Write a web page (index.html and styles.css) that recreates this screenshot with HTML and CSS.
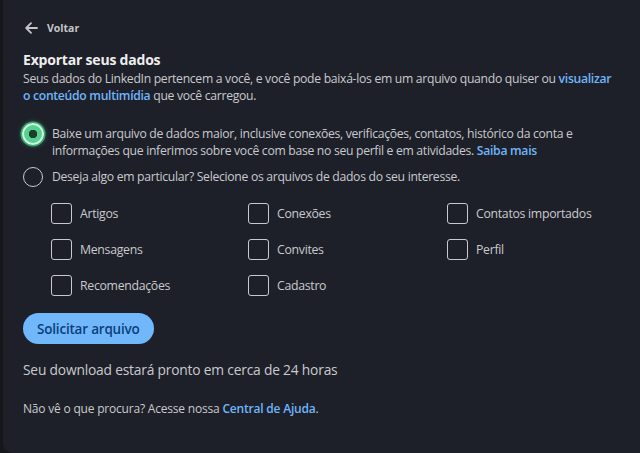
FILE: index.html
```html
<!DOCTYPE html>
<html lang="pt-BR">
<head>
  <meta charset="UTF-8" />
  <meta name="viewport" content="width=device-width, initial-scale=1.0" />
  <title>Exportar seus dados</title>
  <link rel="stylesheet" href="styles.css">
</head>
<body>

<main class="panel">
  <a class="back" href="#">
    <svg width="13" height="12" viewBox="0 0 13 12" fill="none" stroke="currentColor" stroke-width="1.8" stroke-linecap="round" stroke-linejoin="round">
      <path d="M12 6H1.5M6 1.2L1.2 6 6 10.8" />
    </svg>
    Voltar
  </a>

  <h1>Exportar seus dados</h1>
  <p class="intro">
    Seus dados do LinkedIn pertencem a você, e você pode baixá-los em um arquivo quando quiser ou <a href="#">visualizar o conteúdo multimídia</a> que você carregou.
  </p>

  <div class="options">
    <label class="option">
      <span class="radio checked"></span>
      <span class="option-text">Baixe um arquivo de dados maior, inclusive conexões, verificações, contatos, histórico da conta e informações que inferimos sobre você com base no seu perfil e em atividades. <a href="#">Saiba mais</a></span>
    </label>
    <label class="option">
      <span class="radio"></span>
      <span class="option-text">Deseja algo em particular? Selecione os arquivos de dados do seu interesse.</span>
    </label>
  </div>

  <div class="files">
    <label class="file"><span class="box"></span>Artigos</label>
    <label class="file"><span class="box"></span>Conexões</label>
    <label class="file"><span class="box"></span>Contatos importados</label>
    <label class="file"><span class="box"></span>Mensagens</label>
    <label class="file"><span class="box"></span>Convites</label>
    <label class="file"><span class="box"></span>Perfil</label>
    <label class="file"><span class="box"></span>Recomendações</label>
    <label class="file"><span class="box"></span>Cadastro</label>
  </div>

  <button class="request">Solicitar arquivo</button>

  <p class="eta">Seu download estará pronto em cerca de 24 horas</p>

  <p class="help">Não vê o que procura? Acesse nossa <a href="#">Central de Ajuda</a>.</p>
</main>

</body>
</html>
```

FILE: styles.css
```css
body {
  margin: 0;
  background: #15171c;
  font-family: "Open Sans", "Noto Sans", sans-serif;
  color: #c9cacd;
}

a {
  color: #70b5f9;
  font-weight: 600;
  text-decoration: none;
}

.panel {
  margin-left: 3px;
  height: 453px;
  box-sizing: border-box;
  background: #1e2029;
  border-radius: 0 0 0 10px;
  padding: 20px 12px 0 20px;
}

.back {
  display: flex;
  align-items: center;
  gap: 9px;
  color: #c4c5c8;
  font-size: 10.5px;
  font-weight: 700;
  height: 16px;
  margin-left: 2px;
}

h1 {
  margin: 15px 0 0 0;
  font-size: 14px;
  line-height: 18px;
  font-weight: 700;
  color: #eeeeee;
  letter-spacing: -0.2px;
}

.intro {
  margin: 1px 0 0 0;
  max-width: 594px;
  font-size: 12.2px;
  line-height: 17px;
  letter-spacing: -0.3px;
}

.options {
  margin-top: 21px;
  display: flex;
  flex-direction: column;
  gap: 9px;
}

.option {
  display: flex;
  align-items: flex-start;
  gap: 9px;
  font-size: 12.2px;
  line-height: 17px;
  letter-spacing: -0.3px;
}

.option-text {
  max-width: 560px;
}

.radio {
  flex: none;
  width: 20px;
  height: 20px;
  box-sizing: border-box;
  border-radius: 50%;
  border: 1.5px solid #c9cacd;
  margin-top: -1px;
}

.radio.checked {
  border: 2.5px solid #c8f6dd;
  background: radial-gradient(circle, #1f3d2c 0 4px, #56d18f 4.5px);
  box-shadow: 0 0 0 1.5px #3aa671, 0 0 5px #3aa671;
  margin-top: -2px;
  width: 22px;
  height: 22px;
  margin-left: -1px;
  margin-right: -1px;
}

.files {
  margin: 16px 0 0 28px;
  display: grid;
  grid-template-columns: 197px 199px 1fr;
  row-gap: 16px;
}

.file {
  display: flex;
  align-items: center;
  gap: 8px;
  font-size: 12.3px;
  letter-spacing: -0.3px;
  height: 20px;
}

.box {
  width: 21px;
  height: 21px;
  box-sizing: border-box;
  border: 1.5px solid #c9cacd;
  border-radius: 3px;
}

.request {
  display: block;
  margin: 18px 0 0 0;
  height: 31px;
  padding: 0 14px;
  border: none;
  border-radius: 16px;
  background: #71b7fb;
  color: #0b3f7a;
  font-family: inherit;
  font-size: 13.5px;
  font-weight: 600;
  letter-spacing: -0.2px;
}

.eta {
  margin: 17px 0 0 0;
  font-size: 13.8px;
  line-height: 18px;
  letter-spacing: -0.2px;
}

.help {
  margin: 22px 0 0 0;
  font-size: 12px;
  line-height: 16px;
  letter-spacing: -0.2px;
}
```
